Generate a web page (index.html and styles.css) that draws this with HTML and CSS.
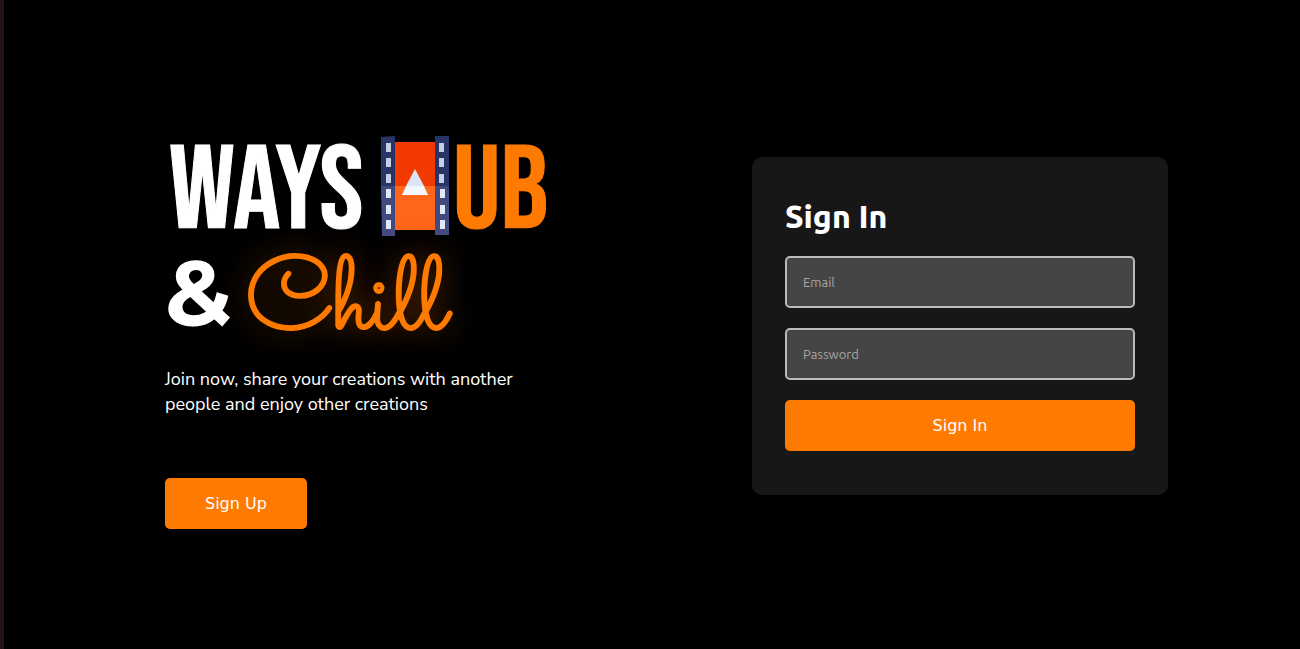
FILE: index.html
```html
<!DOCTYPE html>
<html lang="en">
<head>
<meta charset="utf-8">
<meta name="viewport" content="width=device-width, initial-scale=1">
<title>WaysHub</title>
<link rel="stylesheet" href="styles.css">
</head>
<body>
<main class="page">
  <section class="hero">
    <h1 class="brand">
      <span class="brand-row">
        <span class="ways">WAYS</span>
        <svg class="film" viewBox="0 0 68 100" role="img" aria-label="H">
          <path fill="#f23a00" d="M13 6h42v44H13z"/>
          <path fill="#ff661a" d="M13 50h42v44H13z"/>
          <path fill="#293566" d="M0 1l14-1v50H0zM54 0h14v50H54z"/>
          <path fill="#424b80" d="M0 50h14v50H1zM54 50h14v49H54z"/>
          <path fill="#c8cee2" d="M5 7h5v9H5zM5 22h5v9H5zM5 38h5v9H5zM58 7h5v9h-5zM58 22h5v9h-5zM58 38h5v9h-5z"/>
          <path fill="#e2e8f8" d="M5 53h5v9H5zM5 69h5v9H5zM5 84h5v9H5zM59 53h5v9h-5zM59 69h5v9h-5zM59 84h5v9h-5z"/>
          <path fill="#dce5f3" d="M34 33l9 17H25z"/>
          <path fill="#f1f6ff" d="M25 50h18l4 9H21z"/>
        </svg>
        <span class="ub">UB</span>
      </span>
      <span class="brand-row second">
        <span class="amp">&amp;</span>
        <span class="chill">Chill</span>
      </span>
    </h1>
    <p class="lead">Join now, share your creations with another people and enjoy other creations</p>
    <button class="btn" type="button">Sign Up</button>
  </section>
  <form class="card">
    <h2 class="title">Sign In</h2>
    <input class="field" type="email" placeholder="Email" aria-label="Email">
    <input class="field" type="password" placeholder="Password" aria-label="Password">
    <button class="btn" type="button">Sign In</button>
  </form>
</main>
</body>
</html>
```
FILE: styles.css
```css
* { box-sizing: border-box; }
body {
  margin: 0;
  background: #000;
  color: #fff;
  font-family: Ubuntu, "Noto Sans", sans-serif;
}
.page {
  min-height: 100vh;
  display: flex;
  align-items: center;
  justify-content: space-between;
  gap: 32px;
  padding: 3px 132px 0 161px;
  border-left: 4px solid #22131d;
}
.hero { max-width: 390px; padding-top: 12px; }
.brand { margin: 0; font-weight: 400; }
.brand-row {
  display: flex;
  align-items: center;
  height: 100px;
  font-family: "Bebas Neue", "Liberation Sans Narrow", "Roboto Condensed", "Liberation Sans", sans-serif;
  font-size: 118px;
  line-height: 100px;
}
.ways, .ub { padding-top: 14px; -webkit-text-stroke: 1px currentColor; }
.ways { width: 216px; padding-left: 4px; }
.film { width: 68px; height: 100px; flex: none; margin-right: 4px; }
.ub { color: #ff7a00; }
.second { height: 131px; }
.amp { width: 81px; padding-bottom: 16px; font-family: Montserrat, Poppins, Lato, sans-serif; font-size: 92px; font-weight: 700; }
.chill {
  padding-top: 12px;
  color: #ff7a00;
  font-family: Sacramento, "Dancing Script", Allura, "Great Vibes", Pacifico, Satisfy, Caveat, "Liberation Serif", cursive;
  font-size: 104px;
  -webkit-text-stroke: 2px currentColor;
  text-shadow: 0 0 30px rgba(255, 122, 0, 0.6);
}
.lead {
  margin: 0 0 61px;
  max-width: 360px;
  font-family: Avenir, "Nunito Sans", Mulish, Lato, sans-serif;
  font-size: 18px;
  font-weight: 400;
  line-height: 25px;
}
.btn {
  height: 51px;
  padding: 0 40px;
  border: 0;
  border-radius: 5px;
  background: #ff7a00;
  color: #fff;
  font-family: "DejaVu Sans", sans-serif;
  font-size: 16px;
}
.card {
  flex: 0 1 416px;
  display: flex;
  flex-direction: column;
  gap: 20px;
  padding: 40px 33px 44px;
  border-radius: 10px;
  background: #171717;
}
.title { margin: 0; font-size: 32px; font-weight: 800; line-height: 39px; }
.field {
  width: 100%;
  height: 52px;
  padding: 0 16px;
  border: 2px solid #bcbcbc;
  border-radius: 5px;
  background: #454545;
  color: #fff;
  font-family: Ubuntu, "Noto Sans", sans-serif;
  font-size: 13px;
}
.field::placeholder { color: #a6a6a6; }
```
